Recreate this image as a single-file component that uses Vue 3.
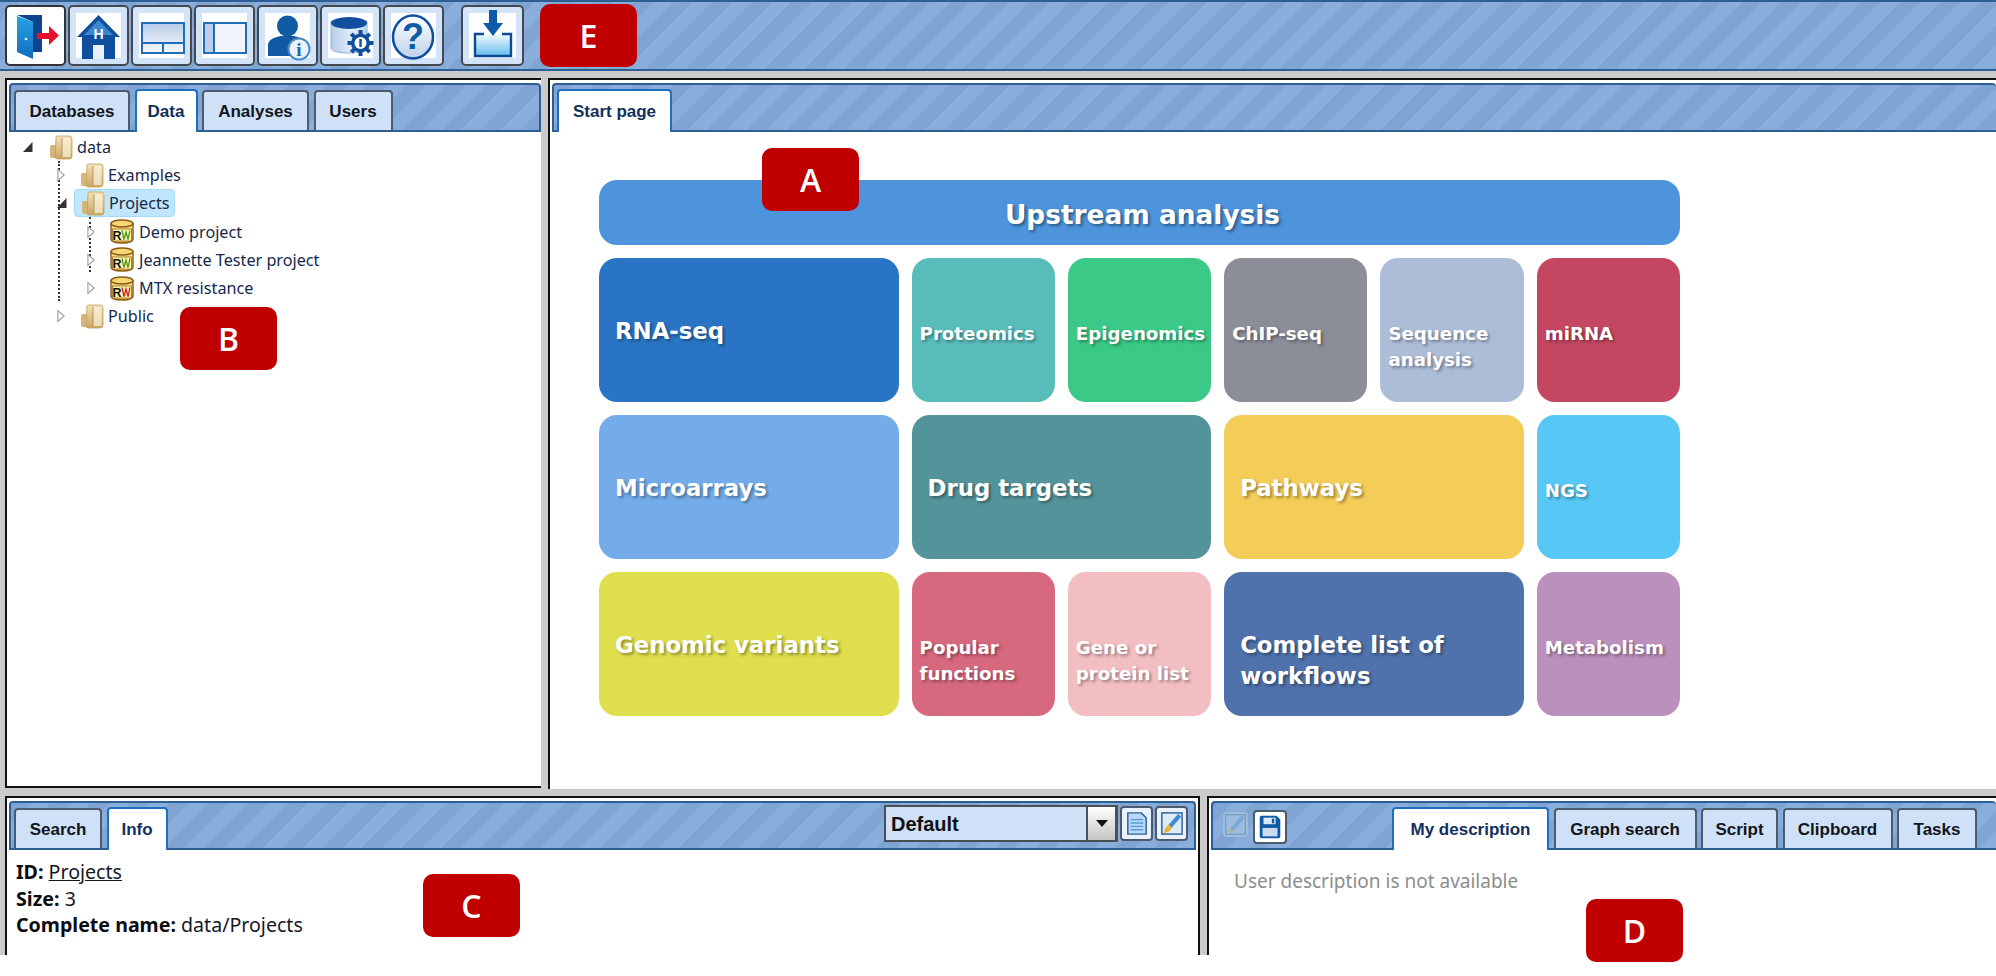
<script setup>
const leftTabs = [
  { name: "Databases", w: 116 },
  { name: "Data", w: 63, active: true },
  { name: "Analyses", w: 107 },
  { name: "Users", w: 79 },
];
const startTabs = [{ name: "Start page", w: 115, active: true }];
const infoTabs = [
  { name: "Search", w: 88 },
  { name: "Info", w: 61, active: true },
];
const descTabs = [
  { name: "My description", w: 157, active: true },
  { name: "Graph search", w: 143 },
  { name: "Script", w: 77 },
  { name: "Clipboard", w: 110 },
  { name: "Tasks", w: 80 },
];
const tree = [
  { name: "data", level: 0, open: true, kind: "folder" },
  { name: "Examples", level: 1, kind: "folder" },
  { name: "Projects", level: 1, open: true, kind: "folder", selected: true },
  { name: "Demo project", level: 2, kind: "db", wave: "#4d9a1a" },
  { name: "Jeannette Tester project", level: 2, kind: "db", wave: "#4d9a1a" },
  { name: "MTX resistance", level: 2, kind: "db", wave: "#d3231f" },
  { name: "Public", level: 1, kind: "folder" },
];
const tiles = [
  { name: "RNA-seq", color: "#2a74c5", big: true },
  { name: "Proteomics", color: "#58bcba" },
  { name: "Epigenomics", color: "#3ac986" },
  { name: "ChIP-seq", color: "#8b8e99" },
  { name: "Sequence analysis", color: "#adbcd7" },
  { name: "miRNA", color: "#c44660" },
  { name: "Microarrays", color: "#74acea", big: true },
  { name: "Drug targets", color: "#53949a", big: true },
  { name: "Pathways", color: "#f3cd58", big: true },
  { name: "NGS", color: "#57c8f6" },
  { name: "Genomic variants", color: "#dfde4d", big: true },
  { name: "Popular functions", color: "#d7697e" },
  { name: "Gene or protein list", color: "#f2bec1" },
  { name: "Complete list of workflows", color: "#4f72ac", big: true },
  { name: "Metabolism", color: "#bb90bc" },
];
</script>

<template>
  <div class="page">
    <svg class="defs" width="0" height="0">
      <defs>
        <linearGradient id="doorFill" x1="0" y1="0" x2="0" y2="1">
          <stop offset="0" stop-color="#27a3e4" />
          <stop offset="1" stop-color="#0f6dbd" />
        </linearGradient>
        <linearGradient id="paneFill" x1="0" y1="0" x2="0" y2="1">
          <stop offset="0" stop-color="#b9cdea" />
          <stop offset="1" stop-color="#f6f9fd" />
        </linearGradient>
        <linearGradient id="cylFill" x1="0" y1="0" x2="1" y2="0">
          <stop offset="0" stop-color="#b6cfec" />
          <stop offset="0.6" stop-color="#e3edf8" />
          <stop offset="1" stop-color="#b6cfec" />
        </linearGradient>
        <linearGradient id="helpFill" x1="0" y1="0" x2="0" y2="1">
          <stop offset="0" stop-color="#ffffff" />
          <stop offset="1" stop-color="#bcd2ee" />
        </linearGradient>
        <linearGradient id="trayFill" x1="0" y1="0" x2="0" y2="1">
          <stop offset="0" stop-color="#f4fafe" />
          <stop offset="1" stop-color="#63bcee" />
        </linearGradient>
        <linearGradient id="folderFill" x1="0" y1="0" x2="0" y2="1">
          <stop offset="0" stop-color="#f3e1b8" />
          <stop offset="1" stop-color="#c9a660" />
        </linearGradient>
        <linearGradient id="dbFill" x1="0" y1="0" x2="0" y2="1">
          <stop offset="0" stop-color="#fbe78a" />
          <stop offset="1" stop-color="#f2bb3c" />
        </linearGradient>
      </defs>
    </svg>

    <header class="toolbar">
      <button class="tool hover">
        <svg viewBox="0 0 57 57">
          <path d="M10 8H35V45H26V15Z" fill="#0e438f" />
          <path d="M10 9L26 15V52L10 45Z" fill="url(#doorFill)" />
          <circle cx="19" cy="32" r="1.3" fill="#fff" />
          <path d="M30 26H42V19L52 28.5L42 38V32H30Z" fill="#e8112d" />
        </svg>
      </button>
      <button class="tool">
        <svg viewBox="0 0 57 57">
          <path d="M28.5 8L50 30H45V52H12V30H7Z" fill="#0f4f9e" />
          <path d="M28.5 13L43 28H14Z" fill="#3c86cc" />
          <rect x="23" y="38" width="11" height="14" fill="#e8f0fa" />
          <text x="28.5" y="32" class="glyph" font-size="14">H</text>
        </svg>
      </button>
      <button class="tool">
        <svg viewBox="0 0 57 57">
          <rect x="9" y="16" width="42" height="30" fill="url(#paneFill)" stroke="#1f6db5" stroke-width="2" />
          <path d="M9 36H51M30 36V46" stroke="#1f6db5" stroke-width="2" fill="none" />
        </svg>
      </button>
      <button class="tool">
        <svg viewBox="0 0 57 57">
          <rect x="8" y="16" width="42" height="30" fill="#f2f6fc" stroke="#1f6db5" stroke-width="2" />
          <rect x="9" y="17" width="9" height="28" fill="#bccfea" />
          <path d="M18 16V46" stroke="#1f6db5" stroke-width="2" fill="none" />
        </svg>
      </button>
      <button class="tool">
        <svg viewBox="0 0 57 57">
          <ellipse cx="28.5" cy="19" rx="10.5" ry="10.5" fill="#0f5aa3" />
          <path d="M9 49V38C9 33 15 30 22 29H35C40 30 44 32 46 36L36 49Z" fill="#0f5aa3" />
          <circle cx="40" cy="42" r="10.5" fill="#eaf2fb" stroke="#4f8ac6" stroke-width="2" />
          <text x="40" y="49" class="info-i" font-size="19">i</text>
        </svg>
      </button>
      <button class="tool">
        <svg viewBox="0 0 57 57">
          <path d="M9 14V41C9 44 17 46 27 46C37 46 45 44 45 41V14Z" fill="url(#cylFill)" stroke="#8fb2da" />
          <ellipse cx="27" cy="16" rx="18" ry="6" fill="#0f4f9e" />
          <g fill="#0f4f9e" transform="translate(38.5 36)">
            <rect x="-2" y="-13" width="4" height="26" />
            <rect x="-2" y="-13" width="4" height="26" transform="rotate(45)" />
            <rect x="-2" y="-13" width="4" height="26" transform="rotate(90)" />
            <rect x="-2" y="-13" width="4" height="26" transform="rotate(135)" />
            <circle r="9.5" />
            <circle r="6" fill="#fff" />
            <rect x="-1.2" y="-4" width="2.4" height="8" />
          </g>
        </svg>
      </button>
      <button class="tool">
        <svg viewBox="0 0 57 57">
          <ellipse cx="28" cy="30" rx="20" ry="21.5" fill="url(#helpFill)" stroke="#0f4f9e" stroke-width="2.5" />
          <text x="28" y="42" class="help-q" font-size="36">?</text>
        </svg>
      </button>
      <button class="tool last">
        <svg viewBox="0 0 57 57">
          <rect x="12" y="27" width="36" height="22" fill="url(#trayFill)" />
          <path d="M21 27H12V49H48V27H39" fill="none" stroke="#0b4a94" stroke-width="2.4" />
          <path d="M26 3H34V16H40L30 29L20 16H26Z" fill="#0f5aa8" />
        </svg>
      </button>
    </header>

    <div class="workspace">
      <div class="row top-row">
        <section class="panel left-panel">
          <div class="bar">
            <div class="tabs">
              <div v-for="t in leftTabs" :key="t.name" class="tab" :class="{ active: t.active }" :style="{ width: t.w + 'px' }">{{ t.name }}</div>
            </div>
          </div>
          <div class="tree">
            <div class="rail rail-one"></div>
            <div class="rail rail-two"></div>
            <div v-for="n in tree" :key="n.name" class="node" :class="'lvl' + n.level">
              <svg class="arrow" :class="{ open: n.open }" viewBox="0 0 10 14">
                <path v-if="n.open" d="M9.5 2V12H0Z" fill="#333" />
                <path v-else d="M1 1L8 7L1 13Z" fill="#fff" stroke="#a2a2a2" stroke-width="1.3" />
              </svg>
              <span class="node-body" :class="{ selected: n.selected }">
                <svg v-if="n.kind === 'folder'" class="node-icon" viewBox="0 0 24 25">
                  <path d="M3 10H8V23H3Q1 23 1 21V12Q1 10 3 10Z" fill="#d4b67a" />
                  <path d="M7 2Q7 1 9 1H20Q23 1 23 4V21Q23 24 20 24H9Q6 24 6 22Z" fill="url(#folderFill)" stroke="#c3a05c" stroke-width=".8" />
                  <path d="M13 3H21.5V22H13Z" fill="#fbf3dd" opacity=".7" />
                  <path d="M13 3V22" stroke="#b8955a" stroke-width="1" />
                </svg>
                <svg v-else class="node-icon db" viewBox="0 0 25 25">
                  <path d="M1.5 5V20Q1.5 24 12.5 24T23.5 20V5Z" fill="url(#dbFill)" stroke="#8a5a14" stroke-width="1.4" />
                  <ellipse cx="12.5" cy="4.5" rx="11" ry="3.5" fill="#f4d774" stroke="#8a5a14" stroke-width="1.4" />
                  <rect x="3" y="10" width="19" height="12" fill="#fff3b0" stroke="#8a5a14" stroke-width=".7" />
                  <text x="7.5" y="20.5" class="db-r" font-size="12.5">R</text>
                  <path d="M12.5 11.5L14.5 20.5L16.5 13L18.5 20.5L20.5 11.5" fill="none" :stroke="n.wave" stroke-width="1.3" />
                </svg>
                <span class="node-label">{{ n.name }}</span>
              </span>
            </div>
          </div>
        </section>

        <section class="panel right-panel">
          <div class="bar">
            <div class="tabs">
              <div v-for="t in startTabs" :key="t.name" class="tab" :class="{ active: t.active }" :style="{ width: t.w + 'px' }">{{ t.name }}</div>
            </div>
          </div>
          <div class="start">
            <div class="banner">Upstream analysis</div>
            <div class="tile-grid">
              <div
                v-for="t in tiles"
                :key="t.name"
                class="tile"
                :class="{ big: t.big }"
                :style="{ background: t.color }"
              >{{ t.name }}</div>
            </div>
          </div>
        </section>
      </div>

      <div class="row bottom-row">
        <section class="panel info-panel">
          <div class="bar spread">
            <div class="tabs">
              <div v-for="t in infoTabs" :key="t.name" class="tab" :class="{ active: t.active }" :style="{ width: t.w + 'px' }">{{ t.name }}</div>
            </div>
            <div class="bar-tools">
              <div class="combo">
                <span class="combo-text">Default</span>
                <span class="combo-btn"><i></i></span>
              </div>
              <button class="mini">
                <svg viewBox="0 0 28 28">
                  <path d="M5 3H19L24 8V25H5Z" fill="#b7d8f7" stroke="#2d5f94" stroke-width="1.5" />
                  <path d="M8 10H21M8 13.5H21M8 17H21M8 20.5H21" stroke="#5b9ad8" stroke-width="1.4" />
                </svg>
              </button>
              <button class="mini">
                <svg viewBox="0 0 28 28">
                  <rect x="4" y="3" width="21" height="22" fill="#dcebfa" stroke="#2d5f94" stroke-width="1.5" />
                  <path d="M8 19L21 4L24 7L11 22Z" fill="#3f8ad6" />
                  <path d="M6 24L8 18L12 22Z" fill="#f0a91e" />
                  <path d="M8 19L11 22L14 18L11 15Z" fill="#f4b62e" />
                </svg>
              </button>
            </div>
          </div>
          <div class="info">
            <div><b>ID:</b> <u>Projects</u></div>
            <div><b>Size:</b> 3</div>
            <div><b>Complete name:</b> data/Projects</div>
          </div>
        </section>

        <section class="panel desc-panel">
          <div class="bar">
            <button class="mini flat">
              <svg viewBox="0 0 28 28">
                <rect x="3" y="3" width="22" height="22" fill="#9dbde0" stroke="#7d9fc6" stroke-width="1.5" />
                <path d="M8 19L21 4L24 7L11 22Z" fill="#7ba6d6" />
                <path d="M6 24L8 18L12 22Z" fill="#b9b48a" />
              </svg>
            </button>
            <button class="mini save">
              <svg viewBox="0 0 30 30">
                <path d="M6 3H22L26 7V25Q26 27 24 27H6Q4 27 4 25V5Q4 3 6 3Z" fill="#0f5aa3" />
                <rect x="8" y="5" width="13" height="7" fill="#dbe8f7" />
                <rect x="17" y="6" width="2.5" height="5" fill="#0f5aa3" />
                <rect x="7" y="16" width="16" height="9" fill="#c9dcf2" />
              </svg>
            </button>
            <div class="tabs desc-tabs">
              <div v-for="t in descTabs" :key="t.name" class="tab" :class="{ active: t.active }" :style="{ width: t.w + 'px' }">{{ t.name }}</div>
            </div>
          </div>
          <div class="desc">User description is not available</div>
        </section>
      </div>
    </div>

    <div class="badge badge-a">A</div>
    <div class="badge badge-b">B</div>
    <div class="badge badge-c">C</div>
    <div class="badge badge-d">D</div>
    <div class="badge badge-e">E</div>
  </div>
</template>

<style scoped>
.page {
  position: relative;
  width: 1996px;
  height: 976px;
  overflow: hidden;
  background: #fff;
  font-family: "Liberation Sans", Arial, sans-serif;
  color: #111;
}
.defs {
  position: absolute;
}
.toolbar,
.bar {
  background: repeating-linear-gradient(135deg, #81a5d2 0 14px, #8aaedb 14px 28px);
}
.toolbar {
  display: flex;
  gap: 2px;
  height: 71px;
  box-sizing: border-box;
  padding: 3px 5px 0;
  border-top: 2px solid #2d5f94;
  border-bottom: 2px solid #2d5f94;
}
.tool {
  width: 61px;
  height: 61px;
  padding: 0;
  box-sizing: border-box;
  border: 2px solid #45494f;
  border-radius: 5px;
  background: #fff;
  box-shadow: inset 0 0 0 6px #d4e4f8;
}
.tool.hover {
  box-shadow: none;
  border-color: #333;
}
.tool.last {
  margin-left: 15px;
  width: 63px;
}
.tool svg {
  display: block;
  width: 57px;
  height: 57px;
}
.glyph {
  fill: #fff;
  font-weight: 700;
  text-anchor: middle;
}
.info-i {
  fill: #1c64ad;
  font-weight: 700;
  text-anchor: middle;
  font-family: "Liberation Serif", serif;
}
.help-q {
  fill: #0f5aa8;
  font-weight: 700;
  text-anchor: middle;
}
.db-r {
  fill: #111;
  font-weight: 700;
  text-anchor: middle;
}

.workspace {
  background: #cbcbcb;
  padding-top: 7px;
}
.row {
  display: flex;
}
.top-row {
  height: 711px;
}
.bottom-row {
  height: 159px;
  margin-top: 7px;
  padding-left: 5px;
}
.panel {
  background: #fff;
  box-sizing: border-box;
  border-top: 2px solid #111;
  border-left: 2px solid #111;
  padding: 3px 1px 0 2px;
}
.left-panel {
  width: 536px;
  height: 710px;
  margin-left: 5px;
  border-bottom: 2px solid #111;
  padding-right: 0;
}
.right-panel {
  width: 1448px;
  margin-left: 7px;
  padding-right: 0;
}
.info-panel {
  width: 1195px;
  border-right: 2px solid #111;
  padding-right: 2px;
}
.desc-panel {
  width: 789px;
  margin-left: 7px;
  padding-right: 0;
}
.bar {
  display: flex;
  align-items: flex-end;
  height: 49px;
  box-sizing: border-box;
  padding-left: 3px;
  border: 2px solid #2d5f94;
  border-radius: 4px 4px 0 0;
}
.right-panel .bar,
.desc-panel .bar {
  border-right: none;
}
.spread {
  justify-content: space-between;
  padding-right: 6px;
}
.tabs {
  display: flex;
  align-items: flex-end;
  gap: 4.5px;
}
.tab {
  height: 40px;
  box-sizing: border-box;
  padding-top: 1px;
  display: flex;
  align-items: center;
  justify-content: center;
  font-size: 17px;
  font-weight: 700;
  color: #12151c;
  background: #cfe1f6;
  border: 2px solid #4c5a6b;
  border-bottom: none;
  border-radius: 4px 4px 0 0;
}
.tab.active {
  height: 43px;
  margin-bottom: -2px;
  color: #12305e;
  background: #fff;
  border-color: #1f6fc0;
}

.tree {
  position: relative;
  padding-top: 1px;
  height: 640px;
}
.rail {
  position: absolute;
  width: 0;
  border-left: 2px dotted #333;
}
.rail-one {
  left: 49px;
  top: 29px;
  height: 140px;
}
.rail-two {
  left: 80px;
  top: 85px;
  height: 55px;
}
.node {
  position: relative;
  display: flex;
  align-items: center;
  height: 28.2px;
}
.lvl0 {
  padding-left: 14px;
}
.lvl1 {
  padding-left: 48px;
}
.lvl2 {
  padding-left: 78px;
}
.arrow {
  width: 9px;
  height: 14px;
  flex: none;
}
.arrow.open {
  width: 10px;
}
.lvl0 .node-body {
  margin-left: 9px;
}
.lvl1 .node-body {
  margin-left: 7px;
}
.lvl2 .node-body {
  margin-left: 6px;
}
.node-body {
  display: flex;
  align-items: center;
  height: 28px;
  box-sizing: border-box;
  padding: 0 4px 0 6px;
  border: 1px solid transparent;
  border-radius: 4px;
}
.node-body.selected {
  background: #bfe6fb;
  border-color: #a5dcf8;
}
.node-icon {
  width: 24px;
  height: 25px;
  flex: none;
}
.node-icon.db {
  width: 26px;
}
.node-label {
  margin-left: 4px;
  font-family: "Noto Sans", sans-serif;
  font-size: 16.2px;
  color: #16284a;
  white-space: nowrap;
}

.start {
  padding: 48px 0 0 47px;
  width: 1081px;
}
.banner {
  height: 65px;
  box-sizing: border-box;
  padding: 3px 0 0 6px;
  display: flex;
  align-items: center;
  justify-content: center;
  border-radius: 18px;
  background: #4d94dc;
  color: #fff;
  font-family: "DejaVu Sans", sans-serif;
  font-size: 26.4px;
  font-weight: 700;
  text-shadow: 2px 2px 3px rgba(0, 0, 0, 0.4);
}
.tile-grid {
  display: grid;
  grid-template-columns: repeat(7, 1fr);
  grid-auto-rows: 144px;
  gap: 13px;
  margin-top: 13px;
}
.tile {
  box-sizing: border-box;
  padding: 63px 4px 0 8px;
  border-radius: 18px;
  color: #fff;
  font-family: "DejaVu Sans", sans-serif;
  font-size: 18.2px;
  font-weight: 700;
  line-height: 25.5px;
  text-shadow: 2px 2px 3px rgba(0, 0, 0, 0.35);
}
.tile.big {
  grid-column: span 2;
  padding: 58px 16px 0;
  font-size: 22.8px;
  line-height: 31px;
}

.bar-tools {
  display: flex;
  align-items: center;
  gap: 2px;
  margin-bottom: 6px;
}
.combo {
  display: flex;
  width: 234px;
  height: 37px;
  box-sizing: border-box;
  border: 2px solid #4a4f55;
  border-right-width: 3px;
  background: #cfe1f6;
}
.combo-text {
  flex: 1;
  padding: 1px 0 0 5px;
  font-size: 20px;
  font-weight: 700;
  line-height: 33px;
}
.combo-btn {
  width: 27px;
  border-left: 2px solid #4a4f55;
  background: linear-gradient(#fff, #c4c4c4);
  display: flex;
  align-items: center;
  justify-content: center;
}
.combo-btn i {
  width: 0;
  height: 0;
  border-top: 7px solid #111;
  border-left: 6px solid transparent;
  border-right: 6px solid transparent;
}
.mini {
  width: 33px;
  height: 35px;
  padding: 1px;
  box-sizing: border-box;
  border: 2px solid #4c5a6b;
  border-radius: 4px;
  background: #e9f2fc;
}
.mini svg {
  display: block;
  width: 100%;
  height: 100%;
}
.flat {
  width: 25px;
  height: 25px;
  border: none;
  background: #9dbde0;
  margin: 0 5px 11px 7px;
  padding: 0;
}
.save {
  width: 34px;
  height: 34px;
  margin-bottom: 4px;
  background: #fff;
}
.desc-tabs {
  margin-left: 105px;
}
.info {
  padding: 9px 0 0 7px;
  font-family: "Noto Sans", sans-serif;
  font-size: 19.6px;
  line-height: 26.5px;
  color: #16181f;
}
.info b {
  font-weight: 700;
  color: #0c0c10;
}
.desc {
  padding: 18px 0 0 23px;
  font-family: "Noto Sans", sans-serif;
  font-size: 19px;
  color: #8d8d8d;
}

.badge {
  position: absolute;
  width: 97px;
  height: 63px;
  display: flex;
  align-items: center;
  justify-content: center;
  border-radius: 10px;
  background: #c00000;
  color: #fff;
  font-family: "Open Sans", sans-serif;
  font-size: 32px;
  font-weight: 600;
}
.badge-a { left: 762px; top: 148px; }
.badge-b { left: 180px; top: 307px; }
.badge-c { left: 423px; top: 874px; }
.badge-d { left: 1586px; top: 899px; }
.badge-e { left: 540px; top: 4px; }
</style>

<style>
html, body {
  background: #fff;
}
</style>
